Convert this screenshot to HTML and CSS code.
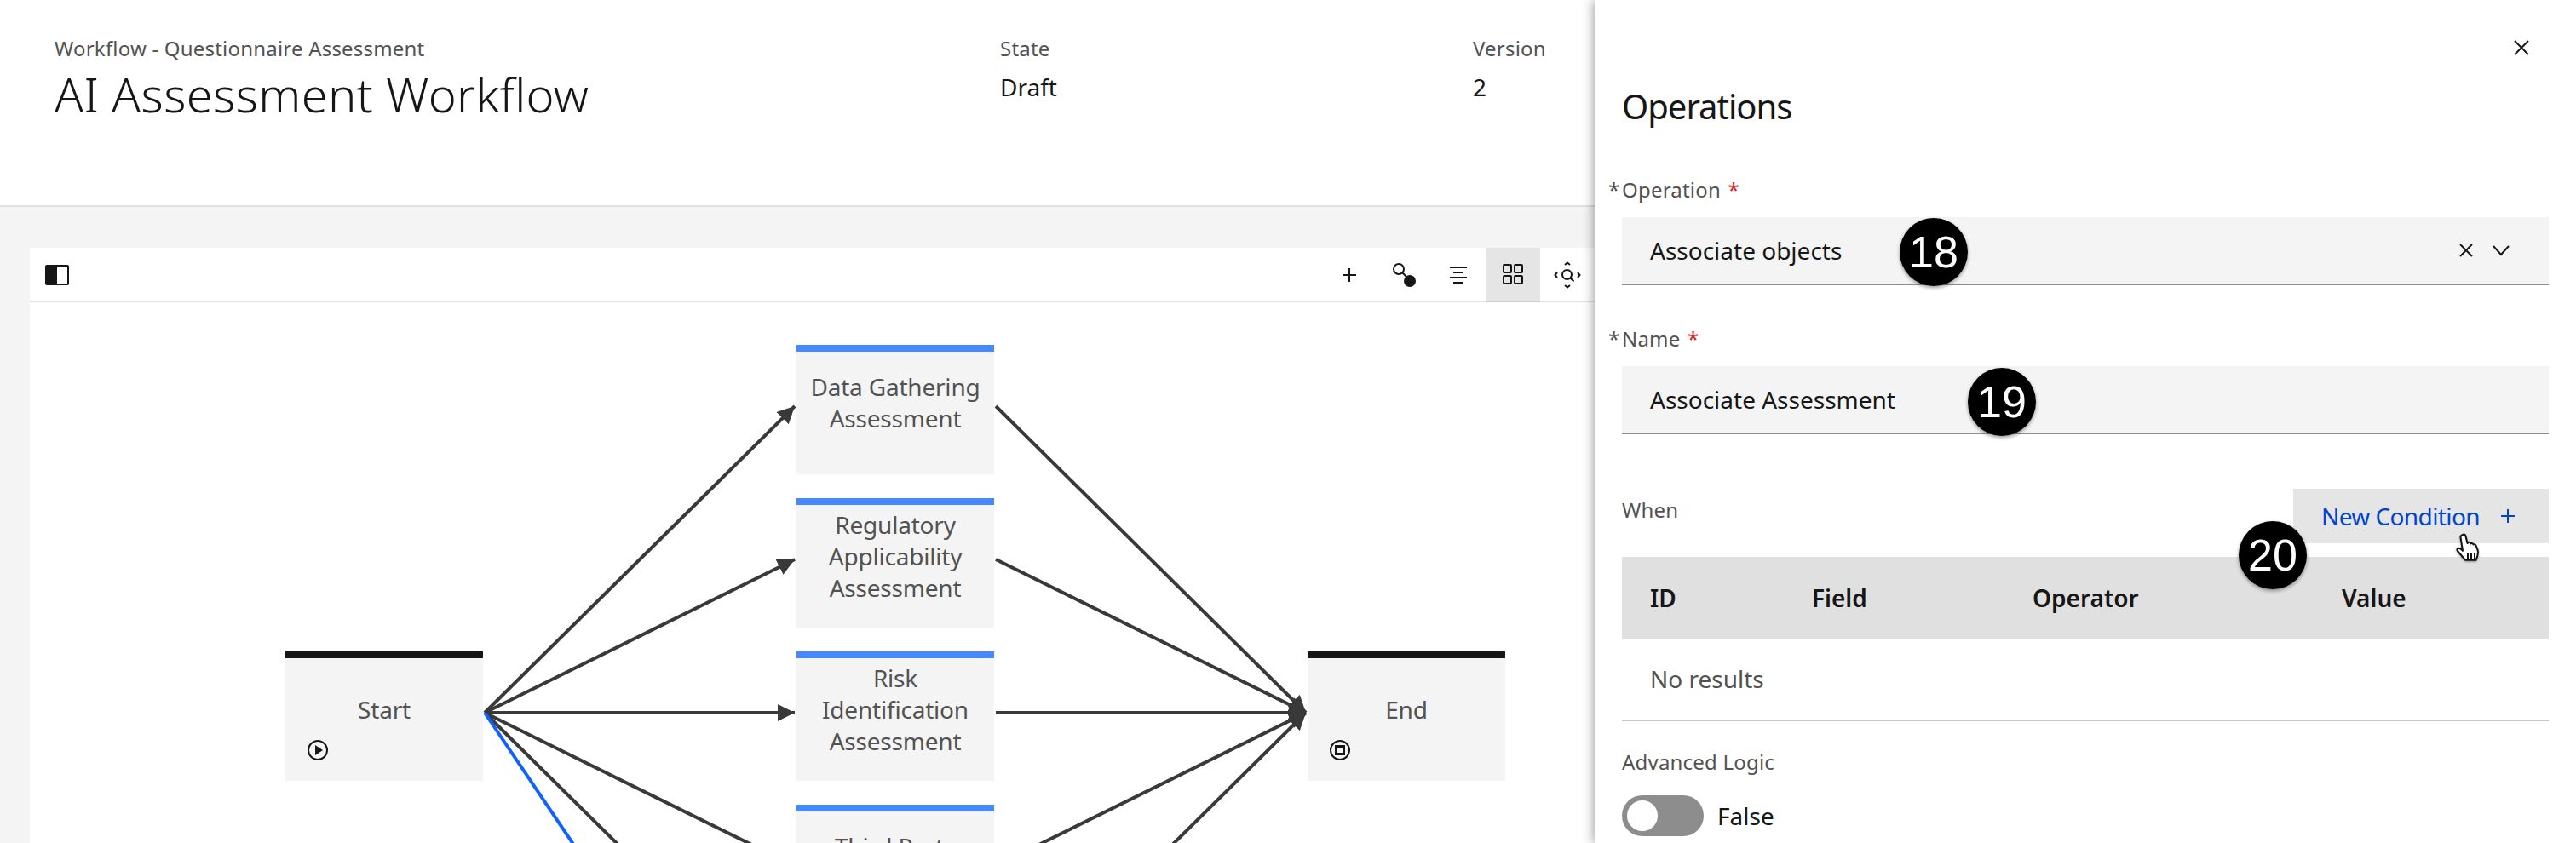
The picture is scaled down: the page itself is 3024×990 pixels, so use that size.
FILE: index.html
```html
<!DOCTYPE html>
<html lang="en">
<head>
  <meta charset="UTF-8" />
  <title>AI Assessment Workflow</title>
  <link rel="stylesheet" href="styles.css">
</head>
<body>
  <div class="page">
    <header class="page-header">
      <div class="title-block">
        <div class="eyebrow">Workflow - Questionnaire Assessment</div>
        <h1>AI Assessment Workflow</h1>
      </div>
      <div class="meta meta-state">
        <div class="eyebrow">State</div>
        <div class="meta-value">Draft</div>
      </div>
      <div class="meta">
        <div class="eyebrow">Version</div>
        <div class="meta-value">2</div>
      </div>
    </header>

    <main class="workspace">
      <section class="canvas">
        <div class="toolbar">
          <button class="tool tool-panel">
            <svg width="28" height="24" viewBox="0 0 28 24"><rect x="1" y="1" width="26" height="22" rx="1" fill="none" stroke="#161616" stroke-width="2"/><rect x="1" y="1" width="13" height="22" fill="#161616"/></svg>
          </button>
          <div class="tool-spacer"></div>
          <button class="tool">
            <svg width="32" height="32" viewBox="0 0 32 32"><path d="M16 8v16M8 16h16" stroke="#161616" stroke-width="2"/></svg>
          </button>
          <button class="tool">
            <svg width="32" height="32" viewBox="0 0 32 32"><circle cx="10" cy="9" r="6" fill="none" stroke="#161616" stroke-width="2"/><path d="M14 13l6 6" stroke="#161616" stroke-width="2"/><circle cx="23" cy="23" r="7" fill="#161616"/></svg>
          </button>
          <button class="tool">
            <svg width="32" height="32" viewBox="0 0 32 32"><path d="M6 7h20M10 13h12M6 19h20M10 25h12" stroke="#161616" stroke-width="2"/></svg>
          </button>
          <button class="tool tool-active">
            <svg width="32" height="32" viewBox="0 0 32 32" fill="none" stroke="#161616" stroke-width="2"><rect x="5" y="5" width="9" height="9" rx="1"/><rect x="18" y="5" width="9" height="9" rx="1"/><rect x="5" y="18" width="9" height="9" rx="1"/><rect x="18" y="18" width="9" height="9" rx="1"/></svg>
          </button>
          <button class="tool">
            <svg width="32" height="32" viewBox="0 0 32 32" fill="none" stroke="#161616" stroke-width="2"><circle cx="15.500" cy="15.500" r="5.500"/><path d="M19.500 19.500l4 4M13 4l3-2.500L19 4M13 28l3 2.500 3-2.500M4 13l-2.500 3L4 19M28 13l2.500 3L28 19"/></svg>
          </button>
        </div>

        <div class="diagram">
          <svg class="edges" width="2954" height="700" viewBox="35 355 2954 700">
            <defs>
              <marker id="arrow" markerUnits="userSpaceOnUse" markerWidth="20" markerHeight="20" refX="20" refY="10" orient="auto">
                <path d="M0 0L20 10L0 20z" fill="#393939"/>
              </marker>
            </defs>
            <g class="edge">
              <path d="M569 837L933 477" marker-end="url(#arrow)"/>
              <path d="M569 837L933 657" marker-end="url(#arrow)"/>
              <path d="M569 837L933 837" marker-end="url(#arrow)"/>
              <path d="M569 837L933 1017" marker-end="url(#arrow)"/>
              <path d="M569 837L933 1197" marker-end="url(#arrow)"/>
              <path d="M1169 477L1533 837" marker-end="url(#arrow)"/>
              <path d="M1169 657L1533 837" marker-end="url(#arrow)"/>
              <path d="M1169 837L1533 837" marker-end="url(#arrow)"/>
              <path d="M1169 1017L1533 837" marker-end="url(#arrow)"/>
              <path d="M1169 1197L1533 837" marker-end="url(#arrow)"/>
            </g>
            <path class="edge-active" d="M569 837L933 1377"/>
          </svg>

          <div class="node node-terminal node-start">
            <div class="node-label">Start</div>
            <svg class="node-icon" width="24" height="24" viewBox="0 0 24 24"><circle cx="12" cy="12" r="11" fill="none" stroke="#161616" stroke-width="2"/><path d="M9 6l9 6-9 6z" fill="#161616"/></svg>
          </div>
          <div class="node node-task node-gather">
            <div class="node-label">Data Gathering<br>Assessment</div>
          </div>
          <div class="node node-task node-regulatory">
            <div class="node-label">Regulatory<br>Applicability<br>Assessment</div>
          </div>
          <div class="node node-task node-risk">
            <div class="node-label">Risk<br>Identification<br>Assessment</div>
          </div>
          <div class="node node-task node-third">
            <div class="node-label">Third Party<br>Assessment</div>
          </div>
          <div class="node node-terminal node-end">
            <div class="node-label">End</div>
            <svg class="node-icon" width="24" height="24" viewBox="0 0 24 24"><circle cx="12" cy="12" r="11" fill="none" stroke="#161616" stroke-width="2"/><rect x="7.500" y="7.500" width="9" height="9" fill="none" stroke="#161616" stroke-width="3"/></svg>
          </div>
        </div>
      </section>
    </main>

    <aside class="drawer">
      <div class="drawer-close">
        <svg width="20" height="20" viewBox="0 0 20 20"><path d="M2 2l16 16M18 2L2 18" stroke="#161616" stroke-width="2"/></svg>
      </div>
      <h2>Operations</h2>

      <div class="field field-operation">
        <label class="field-label"><span class="mark">*</span>Operation <span class="req">*</span></label>
        <div class="input">
          <span>Associate objects</span>
          <span class="input-icons">
            <svg width="20" height="20" viewBox="0 0 20 20"><path d="M3 3l14 14M17 3L3 17" stroke="#161616" stroke-width="2"/></svg>
            <svg width="24" height="20" viewBox="0 0 24 20"><path d="M3 5l9 10 9-10" fill="none" stroke="#161616" stroke-width="2"/></svg>
          </span>
        </div>
      </div>

      <div class="field field-name">
        <label class="field-label"><span class="mark">*</span>Name <span class="req">*</span></label>
        <div class="input"><span>Associate Assessment</span></div>
      </div>

      <div class="when-row">
        <span class="field-label">When</span>
        <button class="new-condition">
          <span>New Condition</span>
          <svg width="24" height="24" viewBox="0 0 24 24"><path d="M12 4v16M4 12h16" stroke="#0043ce" stroke-width="2"/></svg>
        </button>
      </div>

      <table class="conditions">
        <thead>
          <tr><th class="col-id">ID</th><th class="col-field">Field</th><th class="col-op">Operator</th><th>Value</th></tr>
        </thead>
        <tbody>
          <tr><td colspan="4">No results</td></tr>
        </tbody>
      </table>

      <div class="field-label advanced-label">Advanced Logic</div>
      <div class="toggle-row">
        <span class="toggle"><span class="toggle-knob"></span></span>
        <span>False</span>
      </div>
    </aside>

    <div class="badge badge-18">18</div>
    <div class="badge badge-19">19</div>
    <div class="badge badge-20">20</div>

    <svg class="cursor" width="32" height="36" viewBox="0 0 32 36">
      <path d="M9 2c2-1 3 0 3.500 2l2 8 1-1c1.500-.5 2.500 0 3 1.500 1-.8 2.500-.5 3 1 1.200-.6 2.500 0 3 1.200l2 5c1 4 0 8-2 12H12L3 21c-1-1.500-.5-3 1-3.200 1.500-.2 3 .8 5 3L6.500 5C6.500 3.500 7.500 2.500 9 2z" fill="#fff" stroke="#111" stroke-width="2" stroke-linejoin="round"/>
      <path d="M15 24v7M19 24v7M23 24v7" stroke="#111" stroke-width="2"/>
    </svg>
  </div>
</body>
</html>
```

FILE: styles.css
```css
* {
  box-sizing: border-box;
}

html, body {
  margin: 0;
  padding: 0;
}

body {
  font-family: "Noto Sans", "Liberation Sans", sans-serif;
  font-size: 28px;
  color: #161616;
  background: #f4f4f4;
}

.page {
  position: relative;
  width: 3024px;
  height: 990px;
  overflow: hidden;
  display: flex;
  flex-direction: column;
}

/* header */
.page-header {
  height: 243px;
  flex: none;
  display: flex;
  padding: 41px 64px 0;
  background: #fff;
  border-bottom: 2px solid #e0e0e0;
}

.title-block {
  width: 1110px;
}

.eyebrow {
  font-size: 24px;
  line-height: 32px;
  color: #525252;
  letter-spacing: 0.2px;
}

h1 {
  margin: 1px 0 0;
  font-size: 56px;
  line-height: 72px;
  font-weight: 300;
  letter-spacing: 0.36px;
}

.meta {
  width: 300px;
}

.meta-state {
  width: 555px;
}

.meta-value {
  margin-top: 11px;
  line-height: 36px;
}

/* canvas */
.workspace {
  flex: 1;
  padding: 48px 35px 0;
}

.canvas {
  height: 100%;
  background: #fff;
  display: flex;
  flex-direction: column;
}

.toolbar {
  height: 64px;
  flex: none;
  display: flex;
  padding-right: 1117px;
  border-bottom: 2px solid #e0e0e0;
}

.tool {
  width: 64px;
  height: 64px;
  padding: 0;
  border: 0;
  background: none;
  display: flex;
  align-items: center;
  justify-content: center;
}

.tool-panel {
  width: 28px;
  margin-left: 18px;
}

.tool-spacer {
  flex: 1;
}

.tool-active {
  background: #e5e5e5;
  border-bottom: 2px solid #d0d0d0;
}

.diagram {
  position: relative;
  flex: 1;
}

.edges {
  position: absolute;
  left: 0;
  top: 0;
}

.edge path {
  fill: none;
  stroke: #393939;
  stroke-width: 4px;
}

.edge-active {
  fill: none;
  stroke: #0f62fe;
  stroke-width: 4px;
}

.node {
  position: absolute;
  width: 232px;
  height: 152px;
  display: flex;
  align-items: center;
  justify-content: center;
  padding-bottom: 24px;
  background: #f4f4f4;
  border-top: 8px solid #4589ff;
  color: #525252;
  text-align: center;
  line-height: 37px;
  letter-spacing: -0.2px;
}

.node-terminal {
  border-top-color: #161616;
}

.node-icon {
  position: absolute;
  left: 26px;
  top: 96px;
}

.node-start { left: 300px; top: 410px; }
.node-gather { left: 900px; top: 50px; }
.node-regulatory { left: 900px; top: 230px; }
.node-risk { left: 900px; top: 410px; }
.node-third { left: 900px; top: 590px; }
.node-end { left: 1500px; top: 410px; }

/* side panel */
.drawer {
  position: absolute;
  left: 1872px;
  top: 0;
  width: 1152px;
  height: 990px;
  padding: 0 32px;
  background: #fff;
  box-shadow: -2px 0 12px rgba(0, 0, 0, 0.35);
}

.drawer-close {
  position: absolute;
  right: 54px;
  top: 46px;
}

.drawer-close svg {
  display: block;
}

h2 {
  margin: 0;
  padding-top: 100px;
  font-size: 40px;
  line-height: 50px;
  font-weight: 400;
  letter-spacing: -1px;
}

.field-label {
  font-size: 24px;
  line-height: 32px;
  color: #525252;
  letter-spacing: 0.2px;
}

.field-operation {
  margin-top: 52px;
}

.field-name {
  margin-top: 42px;
}

.field-label .mark {
  margin-left: -16px;
  display: inline-block;
  width: 16px;
}

.req {
  color: #da1e28;
  margin-left: 2px;
}

.input {
  height: 80px;
  margin-top: 15px;
  padding: 0 44px 0 33px;
  display: flex;
  align-items: center;
  justify-content: space-between;
  background: #f4f4f4;
  border-bottom: 2px solid #8d8d8d;
}

.input-icons {
  display: flex;
  align-items: center;
  gap: 19px;
}

.when-row {
  margin-top: 64px;
  height: 64px;
  display: flex;
  justify-content: space-between;
  align-items: flex-start;
}

.when-row .field-label {
  margin-top: 9px;
}

.new-condition {
  width: 300px;
  height: 64px;
  padding: 0 36px 0 33px;
  border: 0;
  background: #e5e5e5;
  color: #0043ce;
  font: inherit;
  letter-spacing: -0.6px;
  display: flex;
  align-items: center;
  justify-content: space-between;
}

.conditions {
  width: 100%;
  margin-top: 16px;
  border-collapse: collapse;
  table-layout: fixed;
}

.conditions th {
  height: 96px;
  padding: 0;
  background: #e0e0e0;
  font-weight: 600;
  text-align: left;
}

.conditions td {
  height: 96px;
  padding: 0 0 2px 33px;
  color: #525252;
  border-bottom: 2px solid #c6c6c6;
}

.col-id { width: 223px; padding-left: 33px !important; }
.col-field { width: 259px; }
.col-op { width: 363px; }

.advanced-label {
  margin-top: 32px;
}

.toggle-row {
  margin-top: 23px;
  display: flex;
  align-items: center;
  gap: 16px;
}

.toggle {
  width: 96px;
  height: 48px;
  padding: 6px;
  border-radius: 24px;
  background: #8d8d8d;
}

.toggle-knob {
  display: block;
  width: 36px;
  height: 36px;
  border-radius: 50%;
  background: #fff;
}

/* callouts over the screenshot */
.badge {
  position: absolute;
  width: 80px;
  height: 80px;
  border-radius: 50%;
  background: #000;
  color: #fff;
  display: flex;
  align-items: center;
  justify-content: center;
  font-family: "Liberation Sans", sans-serif;
  font-size: 52px;
  box-shadow: 0 2px 4px rgba(0, 0, 0, 0.4);
}

.badge-18 { left: 2230px; top: 256px; }
.badge-19 { left: 2310px; top: 432px; }
.badge-20 { left: 2628px; top: 612px; }

.cursor {
  position: absolute;
  left: 2882px;
  top: 626px;
  filter: drop-shadow(0 1px 1px rgba(0, 0, 0, 0.4));
}
```
